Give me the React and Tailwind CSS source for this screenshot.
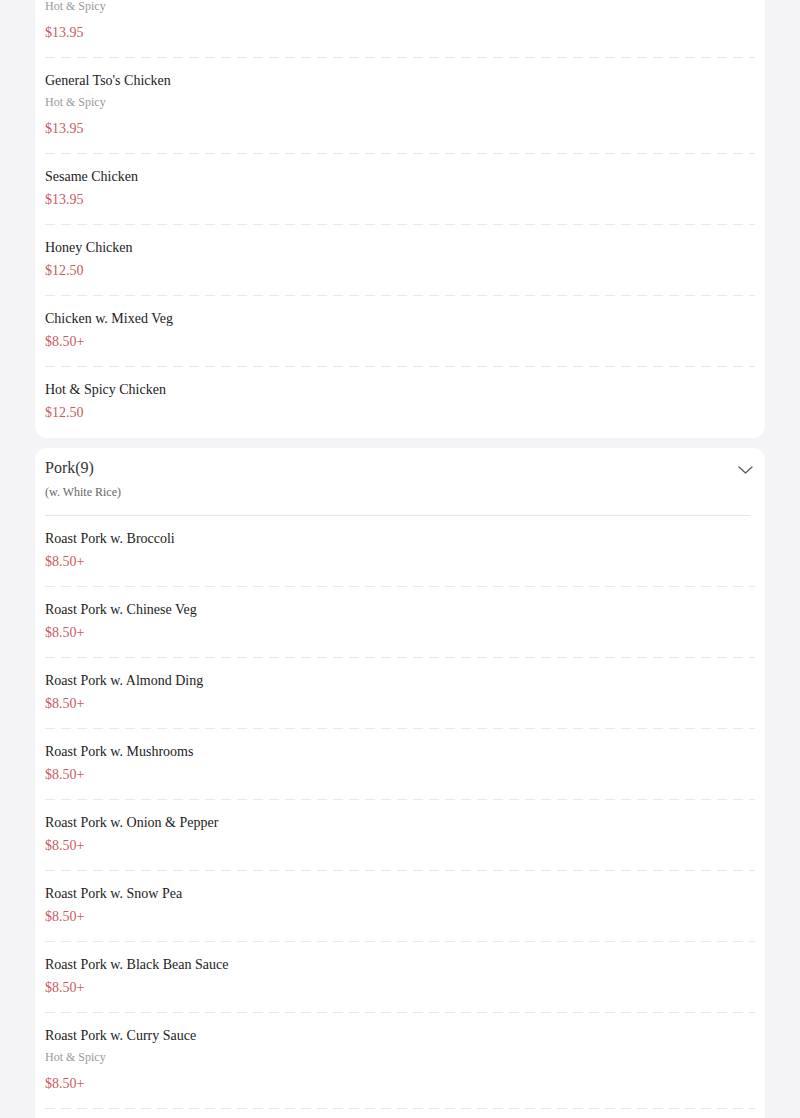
import React from "react";

const chicken = [
  { name: "Kung Pao Chicken", desc: "Hot & Spicy", price: "$13.95" },
  { name: "General Tso's Chicken", desc: "Hot & Spicy", price: "$13.95" },
  { name: "Sesame Chicken", price: "$13.95" },
  { name: "Honey Chicken", price: "$12.50" },
  { name: "Chicken w. Mixed Veg", price: "$8.50+" },
  { name: "Hot & Spicy Chicken", price: "$12.50" },
];

const pork = [
  { name: "Roast Pork w. Broccoli", price: "$8.50+" },
  { name: "Roast Pork w. Chinese Veg", price: "$8.50+" },
  { name: "Roast Pork w. Almond Ding", price: "$8.50+" },
  { name: "Roast Pork w. Mushrooms", price: "$8.50+" },
  { name: "Roast Pork w. Onion & Pepper", price: "$8.50+" },
  { name: "Roast Pork w. Snow Pea", price: "$8.50+" },
  { name: "Roast Pork w. Black Bean Sauce", price: "$8.50+" },
  { name: "Roast Pork w. Curry Sauce", desc: "Hot & Spicy", price: "$8.50+" },
  { name: "Roast Pork w. Garlic Sauce", desc: "Hot & Spicy", price: "$8.50+" },
];

function Dashes() {
  return (
    <div className="h-px bg-[linear-gradient(to_right,#e8e8e8_62%,transparent_0)] bg-[length:16px_1px] bg-repeat-x" />
  );
}

function Item({ name, desc, price, last }) {
  return (
    <div>
      <div className="pt-[13px] pb-[14px]">
        <div className="text-[14px] leading-5 text-[#222]">{name}</div>
        {desc && <div className="mt-[3px] text-[12px] leading-4 text-[#999]">{desc}</div>}
        <div className={`${desc ? "mt-[9px]" : "mt-[3px]"} text-[14px] leading-5 text-[#c95a5e]`}>{price}</div>
      </div>
      {!last && <Dashes />}
    </div>
  );
}

function Chevron() {
  return (
    <svg width="15" height="8" viewBox="0 0 15 8" fill="none" className="mt-[8px] mr-[2px]">
      <path d="M1 1 L7.5 7 L14 1" stroke="#555" strokeWidth="1.2" strokeLinecap="round" strokeLinejoin="round" />
    </svg>
  );
}

export default function App() {
  return (
    <div
      className="h-[1118px] overflow-hidden bg-[#f4f4f6] px-[35px]"
      style={{ fontFamily: '"Liberation Serif", "Times New Roman", serif' }}
    >
      <div className="-mt-[38px] flex flex-col gap-[10px]">
        <div className="rounded-xl bg-white px-[10px] pb-px">
          {chicken.map((it, i) => (
            <Item key={it.name} {...it} last={i === chicken.length - 1} />
          ))}
        </div>

        <div className="rounded-xl bg-white px-[10px]">
          <div className="pt-[10px]">
            <div className="flex items-start justify-between">
              <div className="text-[16px] leading-5 text-[#333]">Pork(9)</div>
              <Chevron />
            </div>
            <div className="mt-[6px] text-[12px] leading-4 text-[#666]">(w. White Rice)</div>
            <div className="mt-[15px] mr-[5px] h-px bg-[#e5e5e5]" />
          </div>
          {pork.map((it, i) => (
            <Item key={it.name} {...it} last={i === pork.length - 1} />
          ))}
        </div>
      </div>
    </div>
  );
}
